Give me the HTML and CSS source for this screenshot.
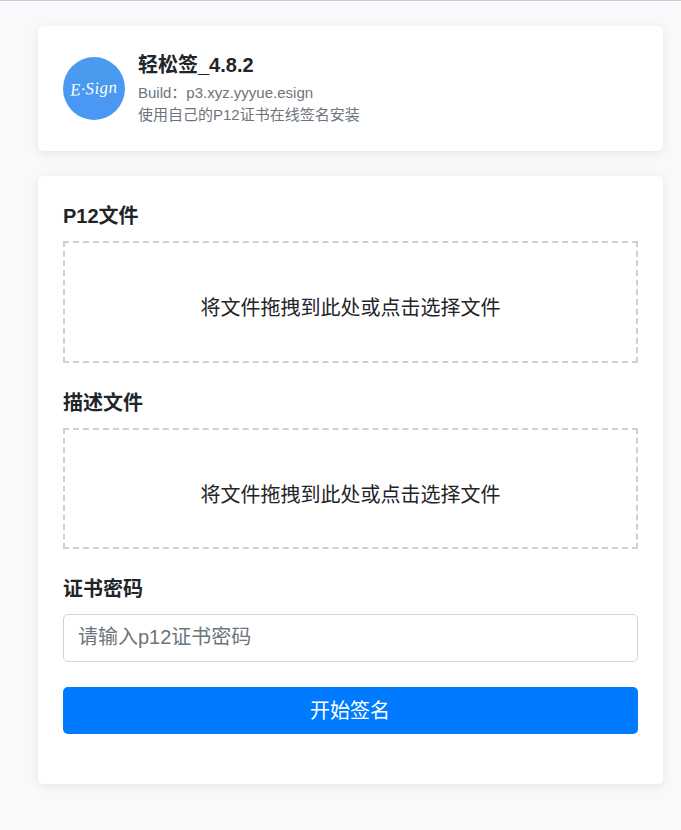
FILE: index.html
```html
<!DOCTYPE html>
<html lang="zh-CN">
<head>
<meta charset="utf-8">
<title>轻松签</title>
<link rel="stylesheet" href="styles.css">
</head>
<body>
<main class="page">
  <section class="card header">
    <div class="logo"><span class="logo-text">E·Sign</span></div>
    <div class="info">
      <h1 class="title">轻松签_4.8.2</h1>
      <p class="meta">Build：p3.xyz.yyyue.esign</p>
      <p class="meta">使用自己的P12证书在线签名安装</p>
    </div>
  </section>
  <section class="card form">
    <div class="field">
      <div class="label">P12文件</div>
      <div class="drop drop-a">将文件拖拽到此处或点击选择文件</div>
    </div>
    <div class="field">
      <div class="label">描述文件</div>
      <div class="drop drop-b">将文件拖拽到此处或点击选择文件</div>
    </div>
    <div class="field">
      <div class="label">证书密码</div>
      <input class="input" type="password" placeholder="请输入p12证书密码">
    </div>
    <button class="submit" type="button">开始签名</button>
  </section>
</main>
</body>
</html>
```
FILE: styles.css
```css
* { box-sizing: border-box; }
html, body { margin: 0; padding: 0; }
body {
  height: 830px;
  overflow: hidden;
  background: #f8f9fa;
  border-top: 1px solid #c9cbce;
  color: #212529;
  font-family: "Liberation Sans", "Noto Sans CJK SC", sans-serif;
}
.page {
  display: flex;
  flex-direction: column;
  gap: 25px;
  padding: 25px 18px 0 38px;
}
.card {
  background: #fff;
  border-radius: 5px;
  box-shadow: 0 2px 10px rgba(0, 0, 0, 0.08);
}
.header {
  display: flex;
  align-items: center;
  gap: 13px;
  height: 125px;
  padding: 0 25px;
}
.logo {
  flex: none;
  width: 62px;
  height: 63px;
  border-radius: 50%;
  background: linear-gradient(180deg, #4a9bec 0%, #4a97f7 100%);
  display: flex;
  align-items: center;
  justify-content: center;
}
.logo-text {
  color: #fff;
  font-family: "Liberation Serif", serif;
  font-style: italic;
  font-size: 17px;
  letter-spacing: 0.4px;
  transform: rotate(-4deg);
}
.info { padding-top: 1px; }
.title {
  margin: 0 0 4px;
  font-size: 20px;
  line-height: 26px;
  font-weight: 700;
}
.meta {
  margin: 0;
  font-size: 15px;
  line-height: 22px;
  color: #6c757d;
}
.form {
  height: 608px;
  padding: 25px;
  display: flex;
  flex-direction: column;
}
.field { margin-bottom: 25px; }
.label {
  font-size: 20px;
  line-height: 30px;
  font-weight: 700;
  margin-bottom: 10px;
}
.drop {
  display: flex;
  align-items: center;
  justify-content: center;
  border: 2px dashed #d0d0d0;
  font-size: 20px;
  padding-top: 9px;
}
.drop-a { height: 122px; }
.drop-b { height: 121px; }
.input {
  display: block;
  width: 100%;
  height: 48px;
  border: 1px solid #ced4da;
  border-radius: 5px;
  padding: 0 14px 2px;
  font: inherit;
  font-size: 20px;
  background: #fff;
}
.input::placeholder { color: #6c757d; opacity: 1; }
.submit {
  height: 47px;
  border: 0;
  border-radius: 5px;
  background: #007bff;
  color: #fff;
  font: inherit;
  font-size: 20px;
  padding: 0 1px 3px 0;
}
```
